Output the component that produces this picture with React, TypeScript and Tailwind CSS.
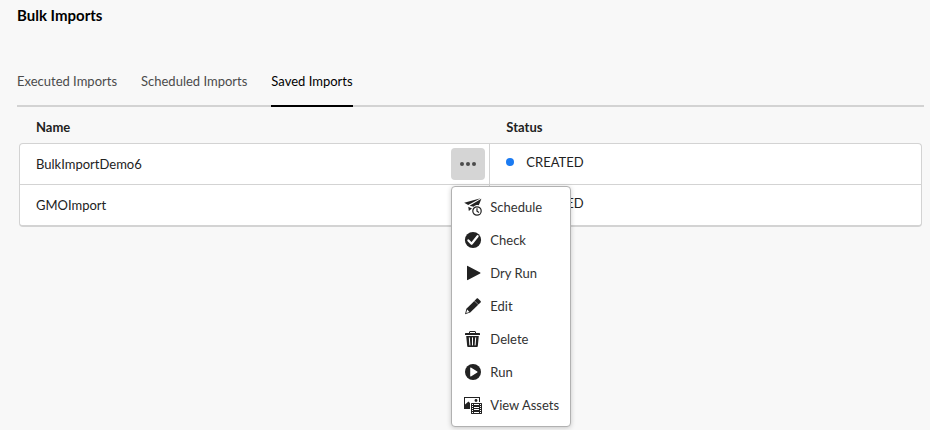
import type { ReactNode } from "react";

const tabs = ["Executed Imports", "Scheduled Imports", "Saved Imports"];

const rows = [
  { name: "BulkImportDemo6", status: "CREATED", open: true },
  { name: "GMOImport", status: "CREATED", open: false },
];

function Icon({ children }: { children: ReactNode }) {
  return (
    <svg viewBox="0 0 18 18" className="size-[18px] shrink-0" fill="#222222" aria-hidden="true">
      {children}
    </svg>
  );
}

const actions: { label: string; icon: ReactNode }[] = [
  {
    label: "Schedule",
    icon: (
      <Icon>
        <path d="M0.2 4.8 16.6 0.3 4.2 6.9Z" />
        <path d="M17.4 0.8 14.8 7.2C12.5 6.8 10.8 7.5 9.6 8.8L5.6 7.7Z" />
        <path d="M4.3 8.8 8 10.4 4.8 13Z" />
        <circle cx="13" cy="13" r="4.2" fill="#fff" stroke="#222222" strokeWidth="1.2" />
        <path d="M13 10.2v3l2 1.3" fill="none" stroke="#222222" strokeWidth="1.2" />
      </Icon>
    ),
  },
  {
    label: "Check",
    icon: (
      <Icon>
        <circle cx="9" cy="9" r="8.1" />
        <path d="M4.4 9.4 7.6 12.8 13.6 5.2" fill="none" stroke="#fff" strokeWidth="2.2" strokeLinecap="round" strokeLinejoin="round" />
      </Icon>
    ),
  },
  {
    label: "Dry Run",
    icon: (
      <Icon>
        <path d="M3 2.4c0-.5.4-.7.8-.5L16.2 8.5c.4.2.4.8 0 1L3.8 16.1c-.4.2-.8 0-.8-.5Z" />
      </Icon>
    ),
  },
  {
    label: "Edit",
    icon: (
      <Icon>
        <path d="M12.7 1.5c.4-.4.9-.4 1.3 0l2.6 2.6c.4.4.4.9 0 1.3L14.4 7.6 10.5 3.7Z" />
        <path d="M10.3 3.9 14.2 7.8 6.2 15.6 1 17.2 2.4 11.8Z" />
        <path d="M3.2 12.6 5.4 14.9 2.2 15.9Z" fill="#fff" />
      </Icon>
    ),
  },
  {
    label: "Delete",
    icon: (
      <Icon>
        <path d="M5.5 3.4V2c0-.3.2-.5.5-.5h5c.3 0 .5.2.5.5v1.4" fill="none" stroke="#222222" strokeWidth="1" />
        <path d="M1.5 3h14c.3 0 .5.2.5.5V5H1V3.5c0-.3.2-.5.5-.5Z" />
        <path d="M2.2 6h12.6l-1 10.2c0 .5-.4.8-.9.8H4.1c-.5 0-.9-.3-.9-.8Z" />
        <path d="M5.3 7.4 5.9 15.4M8.5 7.4v8M11.7 7.4 11.1 15.4" stroke="#fff" strokeWidth="1" />
      </Icon>
    ),
  },
  {
    label: "Run",
    icon: (
      <Icon>
        <circle cx="9" cy="9" r="8" />
        <path d="M6.2 5c0-.4.4-.6.7-.4L13.3 8.6c.3.2.3.6 0 .8L6.9 13.4c-.3.2-.7 0-.7-.4Z" fill="#fff" />
      </Icon>
    ),
  },
  {
    label: "View Assets",
    icon: (
      <Icon>
        <path d="M0 1h16v5h-1V2H1v6.500L4.500 5.500 6 7v6H0Z" />
        <circle cx="12" cy="4.500" r="1.400" />
        <path d="M7.500 7h10c.3 0 .5.2.5.5v10c0 .3-.2.5-.5.5h-10c-.3 0-.5-.2-.5-.5v-10c0-.3.2-.5.5-.5Z" />
        <path d="M10 8h5v1h-5zM10 11h5v1h-5zM10 13h5v1h-5zM10 16h5v1h-5zM8 8h1v1H8zM8 10h1v1H8zM8 12h1v1H8zM8 14h1v1H8zM8 16h1v1H8zM16 8h1v1h-1zM16 10h1v1h-1zM16 12h1v1h-1zM16 14h1v1h-1zM16 16h1v1h-1z" fill="#fff" />
      </Icon>
    ),
  },
];

function ActionMenu() {
  return (
    <div
      role="menu"
      className="absolute top-[38px] left-0 z-10 w-[120px] rounded border border-[#b1b1b1] bg-white pt-[3px] pb-[5px] shadow-[0_1px_5px_rgba(0,0,0,0.2)]"
    >
      {actions.map(({ label, icon }) => (
        <button
          key={label}
          type="button"
          role="menuitem"
          className="flex h-[33px] w-full items-center gap-2 pl-3 text-left whitespace-nowrap text-[#323232]"
        >
          {icon}
          {label}
        </button>
      ))}
    </div>
  );
}

export default function App() {
  return (
    <main className="min-h-screen bg-[#f8f8f8] pt-[3px] pr-1.5 pl-[17px] font-[Lato,sans-serif] text-[13px] leading-5 text-[#222222]">
      <h1 className="text-[15px] leading-6 font-bold text-black">Bulk Imports</h1>

      <div role="tablist" className="mt-10 flex gap-6 border-b-2 border-[#d3d3d3]">
        {tabs.map((tab) => (
          <button
            key={tab}
            type="button"
            role="tab"
            aria-selected={tab === "Saved Imports"}
            className="-mb-0.5 h-10 border-b-2 border-transparent pb-[11px] text-[#4b4b4b] aria-selected:border-black aria-selected:text-black"
          >
            {tab}
          </button>
        ))}
      </div>

      <div className="px-0.5">
        <table className="w-full table-fixed border-separate border-spacing-0 text-left">
          <thead>
            <tr className="h-9">
              <th className="w-[52.2%] px-[17px] pt-[3px] pb-0 font-bold">Name</th>
              <th className="px-4 pt-[3px] pb-0 font-bold">Status</th>
            </tr>
          </thead>
          <tbody>
            {rows.map(({ name, status, open }) => (
              <tr key={name} className="group h-[41px]">
                <td className="border-t border-r border-l border-[#d3d3d3] bg-white p-0 pr-1 pl-4 group-first:rounded-tl group-last:rounded-bl group-last:border-b-2">
                  <div className="flex h-10 items-center justify-between">
                    <span>{name}</span>
                    {open && (
                      <div className="relative">
                        <button
                          type="button"
                          aria-label="More actions"
                          aria-haspopup="menu"
                          aria-expanded="true"
                          className="flex h-8 w-[34px] items-center justify-center gap-0.5 rounded bg-[#d5d5d5]"
                        >
                          <span className="size-1 rounded-full bg-[#4b4b4b]" />
                          <span className="size-1 rounded-full bg-[#4b4b4b]" />
                          <span className="size-1 rounded-full bg-[#4b4b4b]" />
                        </button>
                        <ActionMenu />
                      </div>
                    )}
                  </div>
                </td>
                <td className="border-t border-r border-[#d3d3d3] bg-white p-0 pl-4 group-first:rounded-tr group-last:rounded-br group-last:border-b-2">
                  <div className="flex h-10 items-center gap-3 pb-1">
                    <span className="size-2 rounded-full bg-[#1b7bf2]" />
                    <span>{status}</span>
                  </div>
                </td>
              </tr>
            ))}
          </tbody>
        </table>
      </div>
    </main>
  );
}
